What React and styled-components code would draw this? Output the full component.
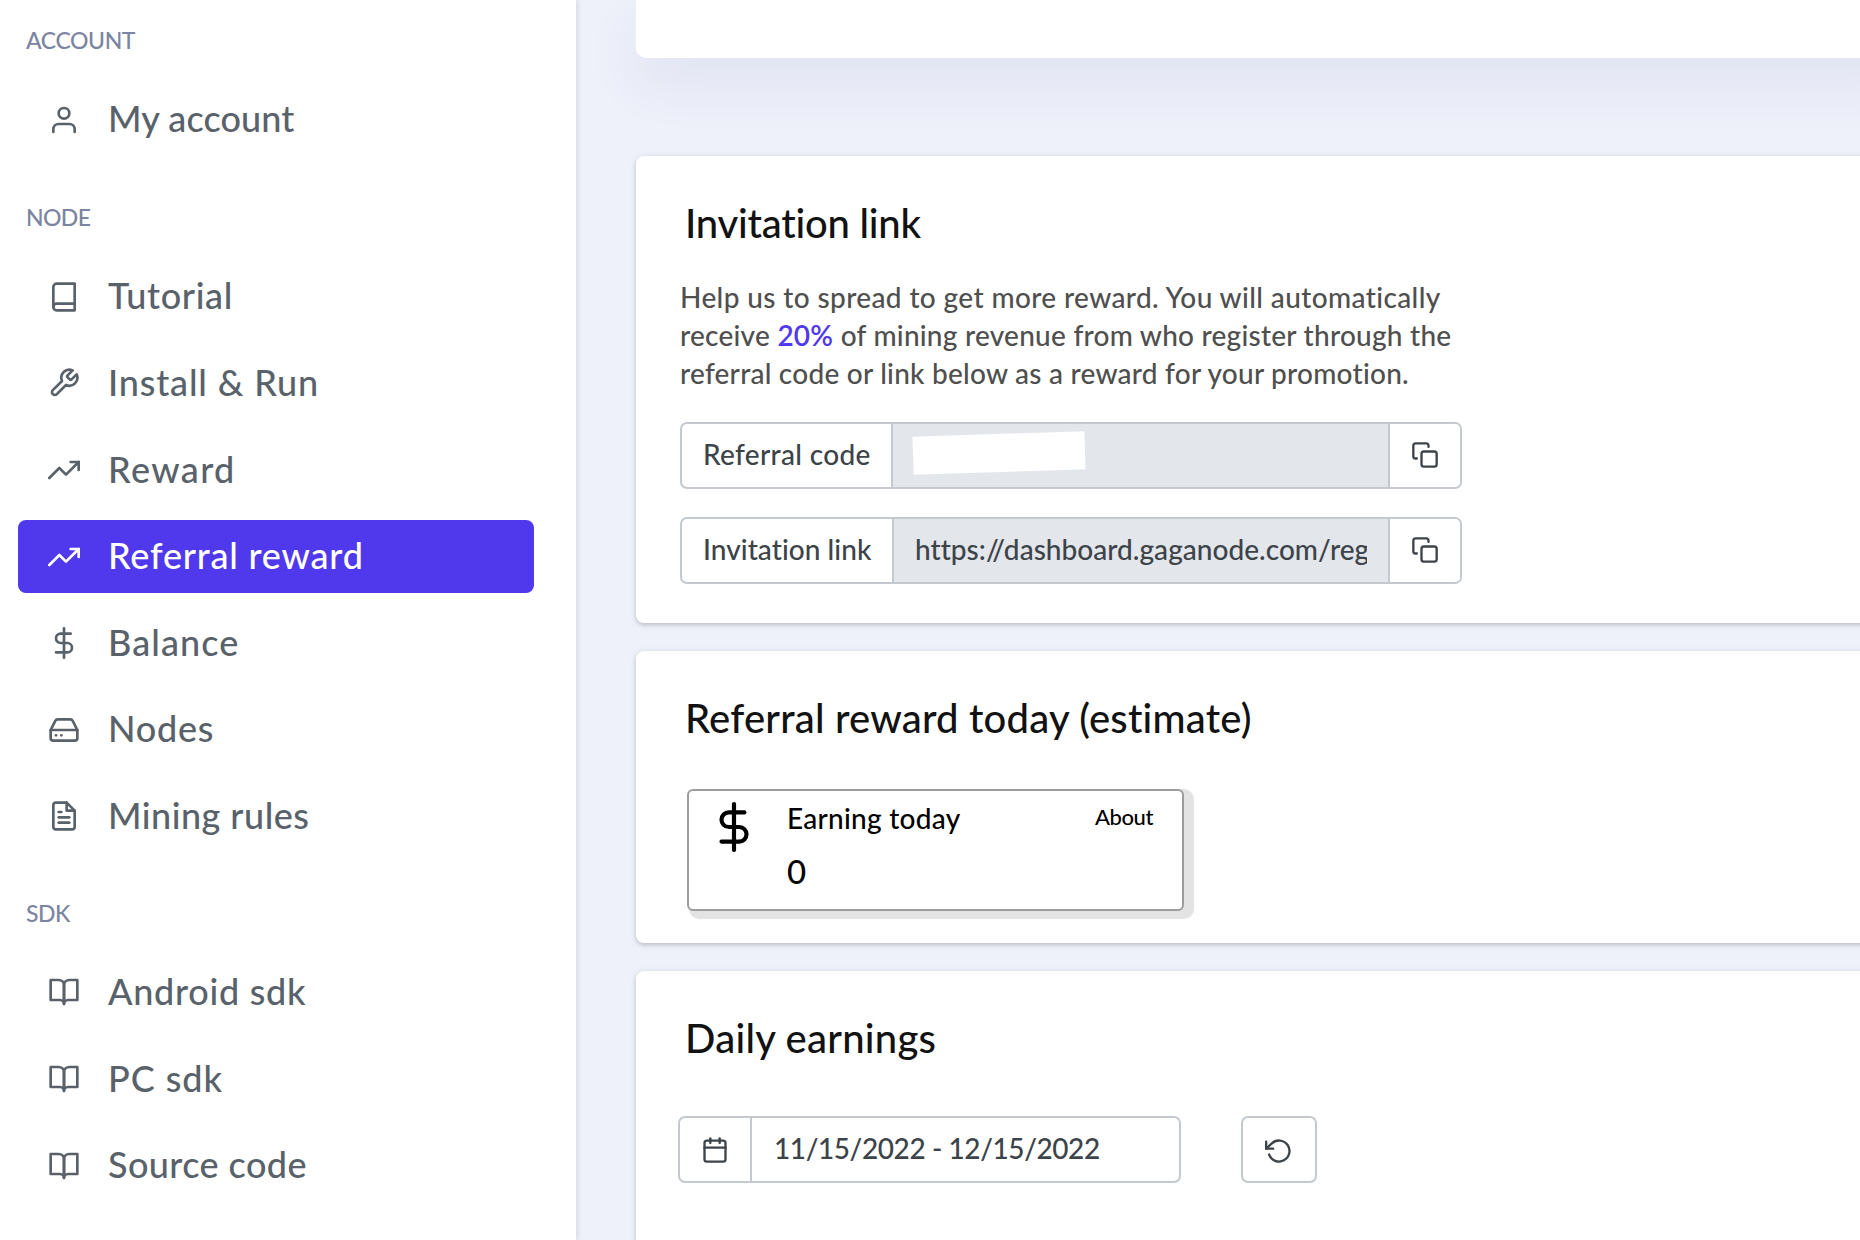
import React from 'react';
import styled, { createGlobalStyle } from 'styled-components';
import {
  FiBook,
  FiBookOpen,
  FiCalendar,
  FiCopy,
  FiDollarSign,
  FiFileText,
  FiHardDrive,
  FiRotateCcw,
  FiTool,
  FiTrendingUp,
  FiUser,
} from 'react-icons/fi';

const color = {
  page: '#eef1fa',
  panel: '#ffffff',
  accent: '#5038ed',
  nav: '#59626a',
  label: '#7b84a0',
  border: '#c4c9d0',
  field: '#e3e6eb',
  control: '#3c4349',
  heading: '#121212',
  body: '#4f4f4f',
};

const GlobalStyle = createGlobalStyle`
  *, *::before, *::after { box-sizing: border-box; }
  body {
    margin: 0;
    overflow: hidden;
    background: ${color.page};
    font-family: Lato, "Noto Sans", sans-serif;
    font-weight: 500;
    font-variant-ligatures: none;
  }
  svg { display: block; flex: none; }
`;

const Shell = styled.div`
  display: flex;
  height: 1240px;
  overflow: hidden;
  background: ${color.page};
`;

const Sidebar = styled.nav`
  flex: none;
  width: 576px;
  height: 100%;
  overflow: hidden;
  padding: 0 42px 0 18px;
  background: ${color.panel};
  box-shadow: 0 0 5px 1px rgba(50, 60, 60, 0.16);
`;

const Section = styled.section`
  &:first-child {
    margin-top: -7px;
  }
`;

const SectionLabel = styled.h2`
  height: ${(p) => p.$height}px;
  margin: 0;
  padding: 33px 0 0 8px;
  color: ${color.label};
  font-size: 23px;
  font-weight: 500;
  line-height: 28px;
  letter-spacing: ${(p) => p.$tracking}px;
`;

const NavItem = styled.a`
  display: flex;
  align-items: center;
  gap: 28px;
  height: 73.6px;
  margin-bottom: 13px;
  padding-left: 30px;
  border-radius: 8px;
  color: ${(p) => (p.$active ? '#fff' : color.nav)};
  background: ${(p) => (p.$active ? color.accent : 'transparent')};
`;

const NavText = styled.span`
  padding-bottom: 3px;
  font-size: 36px;
  line-height: 44px;
  white-space: nowrap;
  letter-spacing: ${(p) => p.$tracking}px;
`;

const Main = styled.main`
  flex: 1;
  min-width: 0;
  padding-left: 60px;
`;

const TopPanel = styled.div`
  height: 58px;
  margin: 0 -60px 98px 0;
  border-radius: 0 0 10px 10px;
  background: ${color.panel};
  box-shadow: 0 24px 56px rgba(60, 60, 130, 0.075);
`;

const Card = styled.section`
  height: ${(p) => p.$height}px;
  margin: 0 -60px 28px 0;
  padding: 43px 44px 0;
  border-radius: 8px;
  background: ${color.panel};
  box-shadow: 0 2px 4px rgba(0, 0, 0, 0.17), 0 1px 10px rgba(0, 0, 0, 0.06);
`;

const CardTitle = styled.h1`
  margin: 0 0 ${(p) => p.$gap}px 5px;
  color: ${color.heading};
  font-size: 40px;
  font-weight: 500;
  line-height: 48px;
  letter-spacing: ${(p) => p.$tracking}px;
`;

const Intro = styled.p`
  margin: 0 0 30px;
  color: ${color.body};
  font-size: 28px;
  line-height: 38px;
`;

const Line = styled.span`
  display: block;
  white-space: nowrap;
  letter-spacing: ${(p) => p.$tracking}px;
`;

const Accent = styled.span`
  color: ${color.accent};
  font-weight: 600;
`;

const FieldGroup = styled.div`
  display: flex;
  width: ${(p) => p.$width}px;
  height: 67px;
  margin-bottom: 28px;
  overflow: hidden;
  border: 2px solid ${color.border};
  border-radius: 7px;
  color: ${color.control};
  font-size: 28px;
  line-height: 34px;
`;

const FieldLabel = styled.span`
  display: flex;
  flex: none;
  align-items: center;
  width: ${(p) => p.$width}px;
  padding: 0 0 4px 21px;
  border-right: 2px solid ${color.border};
  white-space: nowrap;
  letter-spacing: ${(p) => p.$tracking}px;
`;

const FieldValue = styled.div`
  display: flex;
  flex: 1;
  align-items: center;
  min-width: 0;
  padding: 0 21px;
  background: ${color.field};
`;

const ClippedText = styled.span`
  flex: 1;
  overflow: hidden;
  padding-bottom: 4px;
  white-space: nowrap;
  letter-spacing: ${(p) => p.$tracking}px;
`;

const Redaction = styled.span`
  width: 172px;
  height: 38px;
  margin: -6px 0 0 -1px;
  background: #fff;
  transform: rotate(-1.9deg);
`;

const FieldButton = styled.button`
  display: flex;
  flex: none;
  align-items: center;
  justify-content: center;
  width: 72px;
  padding: 0 0 1px;
  border: 0;
  border-left: 2px solid ${color.border};
  color: ${color.control};
  background: ${color.panel};
`;

const StatBox = styled.div`
  display: grid;
  grid-template-columns: 50px 1fr auto;
  column-gap: 28px;
  align-content: start;
  width: 497px;
  height: 122px;
  margin-left: 7px;
  padding: 10px 29px 0 20px;
  border: 2px solid #9c9c9c;
  border-radius: 6px;
  color: #000;
  background: ${color.panel};
  box-shadow: 6px 4px 1px 4px #e3e3e3;
`;

const StatIcon = styled.div`
  grid-row: span 2;
  padding-top: 1px;
`;

const StatName = styled.span`
  font-size: 28px;
  line-height: 34px;
  letter-spacing: 0.27px;
`;

const StatLink = styled.a`
  font-size: 22px;
  line-height: 32px;
  letter-spacing: -0.4px;
`;

const StatValue = styled.span`
  margin-top: 16px;
  font-size: 33px;
  line-height: 40px;
`;

const Controls = styled.div`
  display: flex;
  gap: 60px;
  margin-left: -2px;
`;

const IconCell = styled.span`
  display: flex;
  flex: none;
  align-items: center;
  justify-content: center;
  width: 72px;
  border-right: 2px solid ${color.border};
`;

const DateText = styled.span`
  align-self: center;
  padding: 0 0 3px 22px;
  white-space: nowrap;
  letter-spacing: -0.42px;
`;

const SquareButton = styled.button`
  display: flex;
  align-items: center;
  justify-content: center;
  width: 76px;
  height: 67px;
  padding: 3px 1px 0 0;
  border: 2px solid ${color.border};
  border-radius: 7px;
  color: ${color.control};
  background: ${color.panel};
`;

const sections = [
  {
    label: 'ACCOUNT',
    tracking: -0.4,
    height: 90,
    items: [{ text: 'My account', icon: FiUser, tracking: 0.1 }],
  },
  {
    label: 'NODE',
    tracking: -0.6,
    height: 90.5,
    items: [
      { text: 'Tutorial', icon: FiBook, tracking: 0.65 },
      { text: 'Install & Run', icon: FiTool, tracking: 0.83 },
      { text: 'Reward', icon: FiTrendingUp, tracking: 1.4 },
      { text: 'Referral reward', icon: FiTrendingUp, tracking: 0.8, active: true },
      { text: 'Balance', icon: FiDollarSign, tracking: 1.1 },
      { text: 'Nodes', icon: FiHardDrive, tracking: 0.76 },
      { text: 'Mining rules', icon: FiFileText, tracking: 0.48 },
    ],
  },
  {
    label: 'SDK',
    tracking: -0.5,
    height: 89.4,
    items: [
      { text: 'Android sdk', icon: FiBookOpen, tracking: 0.72 },
      { text: 'PC sdk', icon: FiBookOpen, tracking: 0.93 },
      { text: 'Source code', icon: FiBookOpen, tracking: 0.42 },
    ],
  },
];

function CopyButton() {
  return (
    <FieldButton type="button" aria-label="Copy">
      <FiCopy size={28} />
    </FieldButton>
  );
}

export default function App() {
  return (
    <Shell>
      <GlobalStyle />
      <Sidebar>
        {sections.map((section) => (
          <Section key={section.label}>
            <SectionLabel $height={section.height} $tracking={section.tracking}>
              {section.label}
            </SectionLabel>
            {section.items.map(({ text, icon: Icon, tracking, active }) => (
              <NavItem key={text} $active={active}>
                <Icon size={32} />
                <NavText $tracking={tracking}>{text}</NavText>
              </NavItem>
            ))}
          </Section>
        ))}
      </Sidebar>
      <Main>
        <TopPanel />
        <Card $height={467}>
          <CardTitle $gap={31} $tracking={-0.24}>Invitation link</CardTitle>
          <Intro>
            <Line $tracking={0.38}>Help us to spread to get more reward. You will automatically</Line>
            <Line $tracking={0.25}>
              receive <Accent>20%</Accent> of mining revenue from who register through the
            </Line>
            <Line $tracking={0.24}>referral code or link below as a reward for your promotion.</Line>
          </Intro>
          <FieldGroup $width={782}>
            <FieldLabel $width={211} $tracking={0.33}>Referral code</FieldLabel>
            <FieldValue>
              <Redaction />
            </FieldValue>
            <CopyButton />
          </FieldGroup>
          <FieldGroup $width={782}>
            <FieldLabel $width={212} $tracking={0.05}>Invitation link</FieldLabel>
            <FieldValue>
              <ClippedText $tracking={0.03}>https://dashboard.gaganode.com/reg</ClippedText>
            </FieldValue>
            <CopyButton />
          </FieldGroup>
        </Card>
        <Card $height={292}>
          <CardTitle $gap={47} $tracking={0.2}>Referral reward today (estimate)</CardTitle>
          <StatBox>
            <StatIcon>
              <FiDollarSign size={50} />
            </StatIcon>
            <StatName>Earning today</StatName>
            <StatLink>About</StatLink>
            <StatValue>0</StatValue>
          </StatBox>
        </Card>
        <Card $height={320}>
          <CardTitle $gap={54} $tracking={0.26}>Daily earnings</CardTitle>
          <Controls>
            <FieldGroup $width={503}>
              <IconCell>
                <FiCalendar size={28} />
              </IconCell>
              <DateText>11/15/2022 - 12/15/2022</DateText>
            </FieldGroup>
            <SquareButton type="button" aria-label="Reset">
              <FiRotateCcw size={28} />
            </SquareButton>
          </Controls>
        </Card>
      </Main>
    </Shell>
  );
}
